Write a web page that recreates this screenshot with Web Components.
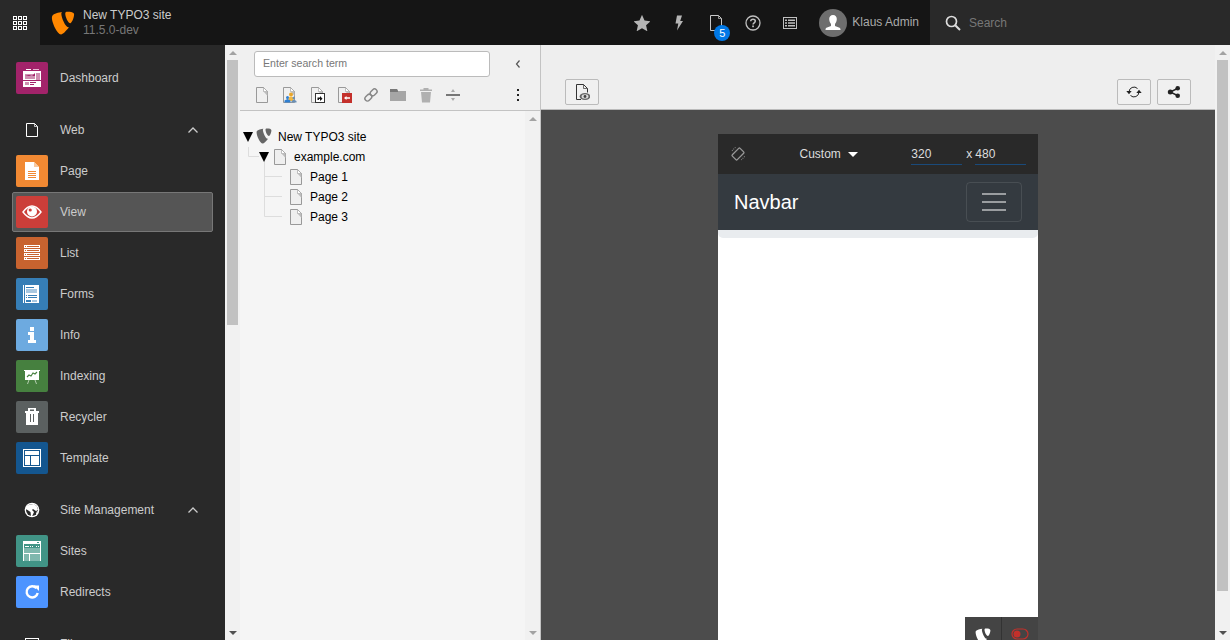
<!DOCTYPE html>
<html>
<head>
<meta charset="utf-8">
<title>TYPO3</title>
<style>
  html, body { margin: 0; height: 100%; overflow: hidden; }
  body { font: 12px/15px "Liberation Sans", Arial, sans-serif; color: #ccc; background: #292929; }
</style>
</head>
<body>
<typo3-backend></typo3-backend>

<script>
// icons are all drawn here so the elements below only pass a name around
const logoPath = 'M12.1 10.7c-.2.1-.4.1-.6.1-1.9 0-4.6-6.6-4.6-8.8 0-.8.2-1.1.5-1.3C5 .9 1.9 1.8.9 3.1c-.2.3-.3.8-.3 1.4C.6 7.9 4.2 15.6 6.7 15.6c1.2 0 3-1.8 5.4-4.9zM10.9.5c2.3 0 4.5.4 4.5 1.7 0 2.7-1.7 5.9-2.5 5.9-1.5 0-3.4-4.2-3.4-6.3 0-1 .4-1.3 1.4-1.3z';
const svg = (box, size, body) => `<svg xmlns="http://www.w3.org/2000/svg" width="${size}" height="${size}" viewBox="0 0 ${box} ${box}">${body}</svg>`;
const sheet = (fill, stroke) => `<path d="M2.5.5h7l4 4v11h-11z" fill="${fill}" stroke="${stroke}"/><path d="M9.5.5v4h4z" fill="#fff" stroke="${stroke}" stroke-width=".6"/><path d="M9.5 4.5h4V9z" fill="#bdbdbd"/>`;

const moduleIcons = {
  dashboard: `<rect x="7" y="9" width="18" height="16" fill="#fff"/><rect x="10" y="7" width="5" height="1" fill="#fff"/><rect x="17" y="7" width="6" height="1" fill="#e9b9d2"/><path d="M9 12h10v5H9z" fill="#cf8fb1"/><path d="M9 14l4-1 3 1 3-3v3H9z" fill="#a2236a"/><rect x="20" y="11" width="4" height="7" fill="#cf8fb1"/><rect x="7" y="18" width="18" height="1" fill="#a2236a"/><rect x="9" y="20" width="4" height="3" fill="#cf8fb1"/><rect x="14" y="20" width="6" height="1" fill="#a2236a"/><rect x="14" y="22" width="4" height="1" fill="#a2236a"/>`,
  page: `<path d="M9 7h9l5 5v13H9z" fill="#fff"/><path d="M18 7v5h5z" fill="#f8c9a0"/><path d="M12 16h8v1h-8zM12 18h8v1h-8zM12 20h8v1h-8zM12 22h8v1h-8z" fill="#f18933"/>`,
  view: `<path d="M7 16c3-4 6-6 9-6s6 2 9 6c-3 4-6 6-9 6s-6-2-9-6z" fill="none" stroke="#fff" stroke-width="1.4"/><circle cx="16" cy="15.5" r="5" fill="#fff"/><circle cx="14.2" cy="14" r="1.6" fill="#cc3e39"/>`,
  list: `<g fill="none" stroke="#fff"><rect x="8.5" y="8.5" width="15" height="2"/><rect x="8.5" y="12.5" width="15" height="2"/><rect x="8.5" y="16.5" width="15" height="2"/><rect x="8.5" y="20.5" width="15" height="2"/></g><path d="M10 8h1v3h-1zM10 12h1v3h-1zM10 16h1v3h-1zM10 20h1v3h-1z" fill="#fff"/>`,
  forms: `<g transform="translate(-2 0)"><rect x="9" y="7" width="1" height="18" fill="#fff"/><rect x="11" y="7" width="14" height="18" fill="#fff"/><rect x="12" y="9" width="8" height="1" fill="#367eb6"/><rect x="12" y="11" width="11" height="4" fill="#a7c7e0"/><path d="M12 17h1v1h-1zM14 17h9v1h-9zM12 19h1v1h-1zM14 19h9v1h-9z" fill="#367eb6"/><rect x="12" y="22" width="5" height="2" fill="#367eb6"/><rect x="18" y="22" width="5" height="2" fill="#a7c7e0"/></g>`,
  info: `<path d="M14 8h4v4h-4zM12 13h6v8h2v3h-8v-3h2v-5h-2z" fill="#fff"/>`,
  indexing: `<rect x="8" y="10" width="16" height="1" fill="#fff"/><rect x="9" y="11" width="14" height="9" fill="#fff"/><path d="M11 17l2-2 2 1 2-3 2 1 2-2" fill="none" stroke="#46803f" stroke-width="1.1"/><path d="M13 20l-1.500 4M19 20l1.500 4" stroke="#cfe0cc" stroke-width=".8" fill="none"/>`,
  recycler: `<path d="M12 7h8v3h3v2H9v-2h3z" fill="#fff"/><rect x="14" y="8.500" width="4" height="1.500" fill="#5b6060"/><path d="M10 12h12v12H10z" fill="#fff"/><path d="M14 13h1v8h-1zM17 13h1v8h-1z" fill="#5b6060"/>`,
  template: `<rect x="7.5" y="7.5" width="17" height="17" fill="none" stroke="#fff"/><rect x="9" y="9" width="14" height="4" fill="#fff"/><rect x="9" y="14" width="5" height="9" fill="#fff"/><rect x="15" y="14" width="8" height="9" fill="#fff"/>`,
  sites: `<rect x="7" y="6" width="18" height="3" fill="#fff"/><rect x="21" y="7" width="2" height="1" fill="#419486"/><rect x="7" y="9" width="1" height="17" fill="#fff"/><rect x="24" y="9" width="1" height="17" fill="#fff"/><path d="M9 11h4v1H9zM14 11h1v1h-1zM16 11h1v1h-1zM20 11h1v1h-1zM22 11h1v1h-1z" fill="#fff"/><rect x="8" y="13" width="16" height="5" fill="#7fb8ae"/><rect x="8" y="18" width="16" height="1" fill="#fff"/><rect x="8" y="19" width="5" height="7" fill="#7fb8ae"/><rect x="13" y="19" width="1" height="7" fill="#fff"/><rect x="14" y="19" width="10" height="7" fill="#7fb8ae"/>`,
  redirects: `<path d="M20.500 12.200A5.600 5.600 0 1 0 21.700 17" fill="none" stroke="#fff" stroke-width="2.400"/><path d="M17.500 9.500H23V15z" fill="#fff"/>`
};

const uiIcons = {
  web: svg(16, 16, `<path d="M2.500 1.500h8l3 3v10h-11z" fill="none" stroke="#fff"/><path d="M10.500 1.500v3h3" fill="none" stroke="#fff" stroke-width=".7"/>`),
  file: svg(16, 16, `<rect x="1.500" y="2.500" width="13" height="12" fill="none" stroke="#fff"/>`),
  globe: svg(16, 16, `<circle cx="8" cy="8" r="7.300" fill="#fff"/><circle cx="8" cy="8" r="6" fill="#292929"/><path d="M6 2.500l4-.5 3 2.500 1 3.500-2 1-3-2-1 1 2 2-2 4.500-1-.5-.5-4-3-2-2-1 1-3zM13 9l1 .5-1 3-1-.5z" fill="#fff"/>`),
  chevronUp: `<svg width="12" height="8" viewBox="0 0 12 8"><path d="M1.500 6.500L6 2l4.500 4.500" fill="none" stroke="#ccc" stroke-width="1.300"/></svg>`,
  grid: `<svg width="14" height="14" viewBox="0 0 14 14"><g fill="none" stroke="#fff"><rect x=".5" y=".5" width="3" height="3"/><rect x="5.500" y=".5" width="3" height="3"/><rect x="10.500" y=".5" width="3" height="3"/><rect x=".5" y="5.500" width="3" height="3"/><rect x="5.500" y="5.500" width="3" height="3"/><rect x="10.500" y="5.500" width="3" height="3"/><rect x=".5" y="10.500" width="3" height="3"/><rect x="5.500" y="10.500" width="3" height="3"/><rect x="10.500" y="10.500" width="3" height="3"/></g></svg>`,
  star: svg(16, 16, `<path d="M8 .3l2.300 5.200 5.600.6-4.200 3.700 1.200 5.500L8 12.500l-4.900 2.800 1.200-5.500L.1 6.100l5.600-.6z" fill="#b5b5b5" transform="translate(-.8 -.5) scale(1.100)"/>`),
  flash: svg(16, 16, `<path d="M6 .5h5L9.200 6H12l-6 9.500L7.300 8.500H4.500z" fill="#b5b5b5"/>`),
  docOutline: svg(16, 16, `<path d="M2.500.5h8l3 3v12h-11z" fill="none" stroke="#c8c8c8"/><path d="M10.500.5v3h3" fill="none" stroke="#c8c8c8" stroke-width=".7"/>`),
  help: svg(16, 16, `<circle cx="8" cy="8" r="7" fill="none" stroke="#c0c0c0" stroke-width="1.300"/><path d="M5.700 6.200C5.800 4.800 6.800 4.200 8 4.200c1.300 0 2.300.8 2.300 1.900 0 1.700-2.200 1.700-2.200 3.400" fill="none" stroke="#c0c0c0" stroke-width="1.500"/><rect x="7.200" y="10.500" width="1.700" height="1.700" fill="#c0c0c0"/>`),
  listBox: svg(16, 16, `<rect x="1.500" y="2.500" width="13" height="11" fill="none" stroke="#c0c0c0"/><path d="M3 4.500h2v1.500H3zM6 4.500h7v1.500H6zM3 7.200h2v1.500H3zM6 7.200h7v1.500H6zM3 10h2v1.500H3zM6 10h7v1.500H6z" fill="#c0c0c0"/>`),
  avatar: `<svg width="28" height="28" viewBox="0 0 28 28"><circle cx="14" cy="14" r="14" fill="#6e6e6e"/><path d="M14 6c2.500 0 3.800 1.800 3.800 4 0 2-1 4-1.800 5v2l4.500 1.800c.8.400 1 1.200 1 2.200H6.500c0-1 .2-1.800 1-2.200L12 17v-2c-.8-1-1.800-3-1.800-5 0-2.200 1.300-4 3.800-4z" fill="#fff"/></svg>`,
  search: `<svg width="16" height="16" viewBox="0 0 16 16"><circle cx="6.500" cy="6.500" r="5" fill="none" stroke="#ddd" stroke-width="1.700"/><path d="M10.200 10.200l4.800 4.800" stroke="#ddd" stroke-width="2" fill="none"/></svg>`,
  chevronLeft: `<svg width="8" height="10" viewBox="0 0 8 10"><path d="M5.500 1.500L2.500 5l3 3.500" fill="none" stroke="#555" stroke-width="1.200"/></svg>`,
  dots: `<svg width="4" height="14" viewBox="0 0 4 14"><path d="M1 1h2v2H1zM1 6h2v2H1zM1 11h2v2H1z" fill="#222"/></svg>`,
  newPage: svg(16, 16, sheet('#f0f0f0', '#999')),
  newShortcut: svg(16, 16, sheet('#f0f0f0', '#999') + `<circle cx="10" cy="7.500" r="2" fill="#e8a62c"/><path d="M7.500 14v-3.500l2.500-1 2.500 1V14z" fill="#f4b73f"/><circle cx="6.500" cy="10.500" r="1.500" fill="#2f7fd1"/><path d="M3.500 15.500V13.500l3-1.500 3 1.500v2z" fill="#2f7fd1"/><circle cx="12.800" cy="11" r="1.300" fill="#6a8fb5"/><path d="M10.500 15.500V14l2.300-1.500 2.700 1.500v1.500z" fill="#6a8fb5"/>`),
  pageCopy: svg(16, 16, sheet('#f0f0f0', '#999') + `<rect x="6.500" y="6.500" width="9" height="9" fill="#fff" stroke="#333"/><path d="M8.500 13v-2.500h2.500V9l2.500 2.700-2.500 2.300v-2H10V13z" fill="#111"/>`),
  pageDelete: svg(16, 16, sheet('#f0f0f0', '#999') + `<rect x="6" y="6" width="10" height="10" fill="#c4302b"/><path d="M8 11l2.500-2v1.300H14v1.500h-3.500V13z" fill="#fff"/>`),
  link: svg(16, 16, `<g fill="none" stroke="#888" stroke-width="1.500" transform="rotate(-45 8 8)"><rect x=".5" y="5.500" width="7.500" height="5" rx="2.500"/><rect x="8" y="5.500" width="7.500" height="5" rx="2.500"/></g>`),
  folder: svg(16, 16, `<path d="M0 2h7l1 2h8v10H0z" fill="#a6a6a6"/><path d="M0 2h7l1 2v1H0z" fill="#787878"/>`),
  trash: svg(16, 16, `<path d="M5.500 1h5v1.500H14V4H2V2.500h3.500z" fill="#b0b0b0"/><path d="M3 5h10l-1 10.500H4z" fill="#b0b0b0"/>`),
  divider: svg(16, 16, `<rect x="1" y="7" width="14" height="2" fill="#777"/><path d="M8 2l2 3H6zM8 14l-2-3h4z" fill="#aaa"/>`),
  viewPage: svg(16, 16, `<path d="M7 15.500H2.500V.5h7l4 4v4" fill="none" stroke="#333"/><path d="M9.500.5v4h4" fill="none" stroke="#333" stroke-width=".7"/><ellipse cx="11" cy="12.500" rx="5.400" ry="3.400" fill="#666"/><ellipse cx="11" cy="12.500" rx="3.400" ry="2.200" fill="#ddd"/><circle cx="11" cy="12.500" r="1.400" fill="#444"/>`),
  refresh: svg(16, 16, `<path d="M3 8a5 5 0 0 1 8.500-3.500M13 8a5 5 0 0 1-8.500 3.500" fill="none" stroke="#222" stroke-width="1"/><path d="M.3 7h5.400L3 10.200zM10.300 9h5.400L13 5.800z" fill="#222"/>`),
  share: svg(16, 16, `<circle cx="4.300" cy="8" r="2.500" fill="#222"/><circle cx="11.700" cy="4.300" r="2.300" fill="#222"/><circle cx="11.700" cy="11.700" r="2.300" fill="#222"/><path d="M4.300 8l7.400-3.700M4.300 8l7.400 3.700" stroke="#222" stroke-width="1.500"/>`),
  rotate: svg(16, 16, `<g transform="rotate(45 8 8)" fill="none"><rect x="4.500" y="2.500" width="7" height="11" rx="1" stroke-width="1.300" stroke="#999"/><path d="M1.500 5v6M14.500 5v6" stroke="#888" stroke-dasharray="1 1"/></g>`),
  caret: `<svg width="10" height="5" viewBox="0 0 10 5"><path d="M0 0h10L5 5z" fill="#fff"/></svg>`
};

class ScrollRail extends HTMLElement {
  connectedCallback() {
    const thumbH = this.getAttribute('thumb');
    const up = this.getAttribute('up') || '#a3a3a3';
    const down = this.getAttribute('down') || '#505050';
    const bg = this.getAttribute('bg') || '#f1f1f1';
    this.attachShadow({ mode: 'open' }).innerHTML = `
      <style>
        :host { display: flex; flex-direction: column; flex: none; width: 15px; height: 100%; background: ${bg}; }
        .btn { flex: none; height: 15px; display: flex; align-items: center; justify-content: center; }
        .track { flex: 1; min-height: 0; }
        .thumb { height: ${thumbH || 0}px; margin: 0 2px; background: #c1c1c1; }
      </style>
      <div class="btn"><svg width="8" height="4" viewBox="0 0 8 4"><path d="M4 0l4 4H0z" fill="${up}"/></svg></div>
      <div class="track"><div class="thumb"></div></div>
      <div class="btn"><svg width="8" height="4" viewBox="0 0 8 4"><path d="M0 0h8L4 4z" fill="${down}"/></svg></div>`;
  }
}

class ToolbarItem extends HTMLElement {
  connectedCallback() {
    this.attachShadow({ mode: 'open' }).innerHTML = `
      <style>
        :host { display: flex; align-items: center; justify-content: center; flex: none; width: 37px; height: 45px; }
        svg { display: block; }
      </style>${uiIcons[this.getAttribute('icon')]}<slot></slot>`;
  }
}

class TopBar extends HTMLElement {
  constructor() {
    super();
    this.attachShadow({ mode: 'open' }).innerHTML = `
      <style>
        :host { display: flex; flex: none; height: 45px; background: #151515; color: #ccc; }
        .toggle { width: 40px; background: #292929; display: flex; align-items: center; justify-content: center; }
        .brand { display: flex; align-items: center; padding-left: 11px; }
        .brand svg { display: block; margin-right: 8px; }
        .site { display: flex; flex-direction: column; }
        .site small { font-size: 12px; color: #777; }
        .tools { margin-left: auto; display: flex; align-items: center; padding-right: 11px; }
        .doc { position: relative; }
        .badge { position: absolute; left: 17px; top: 25px; width: 16px; height: 16px; border-radius: 50%; background: #0078e6; color: #fff; font-size: 11px; line-height: 16px; text-align: center; }
        .user { display: flex; align-items: center; margin-left: 11px; color: #aaa; }
        .user svg { display: block; margin-right: 5px; }
        .search { flex: none; width: 300px; background: #292929; display: flex; align-items: center; padding-left: 15px; box-sizing: border-box; color: #777; }
        .search svg { margin-right: 8px; }
        .search span { padding-top: 2px; }
      </style>
      <div class="toggle">${uiIcons.grid}</div>
      <div class="brand">
        <svg width="24" height="24" viewBox="0 0 16 16"><path d="${logoPath}" fill="#ff8700"/></svg>
        <div class="site"><span>New TYPO3 site</span><small>11.5.0-dev</small></div>
      </div>
      <div class="tools">
        <toolbar-item icon="star"></toolbar-item>
        <toolbar-item icon="flash"></toolbar-item>
        <toolbar-item icon="docOutline" class="doc"><span class="badge">5</span></toolbar-item>
        <toolbar-item icon="help"></toolbar-item>
        <toolbar-item icon="listBox"></toolbar-item>
        <div class="user">${uiIcons.avatar}<span>Klaus Admin</span></div>
      </div>
      <div class="search">${uiIcons.search}<span>Search</span></div>`;
  }
}

class ModuleItem extends HTMLElement {
  connectedCallback() {
    const icon = this.getAttribute('icon');
    this.attachShadow({ mode: 'open' }).innerHTML = `
      <style>
        :host { display: flex; align-items: center; box-sizing: border-box; height: 40px; width: 201px; margin: 0 0 1px 12px; padding-left: 4px; border: 1px solid transparent; border-left-width: 0; border-radius: 2px; }
        :host([active]) { background: #555; border: 1px solid #777; padding-left: 3px; }
        .tile { width: 32px; height: 32px; border-radius: 2px; margin-right: 12px; flex: none; }
        svg { display: block; }
      </style>
      <div class="tile" style="background:${this.getAttribute('color')}"><svg width="32" height="32" viewBox="0 0 32 32">${moduleIcons[icon]}</svg></div>
      <slot></slot>`;
  }
}

class ModuleGroup extends HTMLElement {
  connectedCallback() {
    const chev = this.hasAttribute('open') ? uiIcons.chevronUp : '';
    this.attachShadow({ mode: 'open' }).innerHTML = `
      <style>
        :host { display: block; }
        .head { display: flex; align-items: center; height: 42px; padding: 10px 26px 0 24px; }
        .head svg { display: block; flex: none; }
        .label { margin-left: 20px; flex: 1; }
      </style>
      <div class="head">${uiIcons[this.getAttribute('icon')]}<span class="label">${this.getAttribute('label')}</span>${chev}</div>
      <slot></slot>`;
  }
}

class ModuleMenu extends HTMLElement {
  constructor() {
    super();
    this.attachShadow({ mode: 'open' }).innerHTML = `
      <style>
        :host { display: flex; flex: none; width: 240px; height: 100%; background: #292929; color: #ccc; }
        .list { width: 225px; padding-top: 13px; overflow: hidden; box-sizing: border-box; }
      </style>
      <div class="list"><slot></slot></div>
      <scroll-rail thumb="265"></scroll-rail>`;
  }
}

class TreeNode extends HTMLElement {
  connectedCallback() {
    const level = +this.getAttribute('level') || 0;
    const w = 16 + 16 * level;
    const lines = {
      root: `<path d="M3 5h10L8 15z" fill="#000"/>`,
      site: `<path d="M8.500 0v9.500H19" fill="none" stroke="#ddd"/><path d="M24.500 14v6" stroke="#ddd"/><path d="M19 5h10L24 15z" fill="#000"/>`,
      leaf: `<path d="M24.500 0v20M24.500 9.500H42" fill="none" stroke="#ddd"/>`,
      last: `<path d="M24.500 0v9.500H42" fill="none" stroke="#ddd"/>`
    }[this.getAttribute('guide')];
    const icon = level === 0
      ? `<svg width="16" height="16" viewBox="0 0 16 16" style="margin-top:-2px"><path d="${logoPath}" fill="#666"/></svg>`
      : svg(16, 16, sheet('#efefef', '#999'));
    this.attachShadow({ mode: 'open' }).innerHTML = `
      <style>
        :host { display: flex; align-items: center; height: 20px; color: #000; }
        svg { display: block; flex: none; overflow: visible; }
        span { margin-left: 6px; }
      </style>
      <svg width="${w}" height="20" viewBox="0 0 ${w} 20">${lines}</svg>${icon}<span><slot></slot></span>`;
  }
}

class TreePanel extends HTMLElement {
  constructor() {
    super();
    const tools = ['newPage', 'newShortcut', 'pageCopy', 'pageDelete', 'link', 'folder', 'trash', 'divider'];
    this.attachShadow({ mode: 'open' }).innerHTML = `
      <style>
        :host { display: flex; flex-direction: column; flex: none; width: 301px; height: 100%; background: #f0f0f0; border-right: 1px solid #c3c3c3; box-sizing: border-box; }
        .head { flex: none; height: 66px; box-sizing: border-box; padding: 6px 14px 0; border-bottom: 1px solid #c3c3c3; }
        .searchrow { display: flex; align-items: center; }
        .field { width: 236px; height: 26px; box-sizing: border-box; border: 1px solid #bbb; border-radius: 3px; background: #fff; color: #777; font-size: 10.600px; line-height: 23px; padding-left: 8px; }
        .back { margin-left: 24px; display: flex; }
        .tools { display: flex; align-items: center; margin-top: 10px; height: 16px; }
        .tool { width: 27.300px; flex: none; }
        .tool svg, .back svg { display: block; }
        .more { margin-left: auto; margin-right: 6px; }
        .more svg { display: block; }
        .body { flex: 1; min-height: 0; display: flex; background: #f5f5f5; }
        .nodes { flex: 1; padding-top: 16px; }
      </style>
      <div class="head">
        <div class="searchrow"><div class="field">Enter search term</div><div class="back">${uiIcons.chevronLeft}</div></div>
        <div class="tools">${tools.map(t => `<div class="tool">${uiIcons[t]}</div>`).join('')}<div class="more">${uiIcons.dots}</div></div>
      </div>
      <div class="body">
        <div class="nodes"><slot></slot></div>
        <scroll-rail down="#a3a3a3"></scroll-rail>
      </div>`;
  }
}

class DeviceFrame extends HTMLElement {
  constructor() {
    super();
    this.attachShadow({ mode: 'open' }).innerHTML = `
      <style>
        :host { display: flex; flex-direction: column; position: relative; flex: none; width: 320px; height: 506px; background: #fff; }
        .size { flex: none; display: flex; align-items: center; height: 40px; background: #292929; color: #ddd; padding-left: 12px; }
        .size svg { display: block; flex: none; }
        .preset { margin-left: 53.500px; }
        .size .caret { margin: 0 53px 0 7.500px; }
        .num { width: 51px; box-sizing: border-box; height: 21px; line-height: 20px; border-bottom: 1px solid #1a4a7a; }
        .x { margin: 0 0 0 4px; width: 9px; }
        .navbar { flex: none; display: flex; align-items: center; justify-content: space-between; height: 56px; padding: 0 16px; background: #343a40; color: #fff; font-size: 20px; }
        .toggler { width: 56px; height: 40px; box-sizing: border-box; border: 1px solid rgba(255,255,255,.1); border-radius: 4px; display: flex; flex-direction: column; justify-content: center; align-items: center; gap: 6px; }
        .toggler i { display: block; width: 24px; height: 2px; background: #9a9da0; }
        .jumbo { flex: none; height: 8px; background: #e9ecef; border-radius: 0 0 5px 5px; }
        .admin { position: absolute; right: 0; bottom: 0; width: 73px; height: 23px; background: #444; display: flex; }
        .admin div { flex: 1; overflow: hidden; padding: 11px 0 0 0; display: flex; justify-content: center; }
        .admin div + div { border-left: 1px solid #333; }
      </style>
      <div class="size">
        ${uiIcons.rotate}
        <span class="preset">Custom</span><span class="caret">${uiIcons.caret}</span>
        <span class="num">320</span><span class="x">x</span><span class="num">480</span>
      </div>
      <div class="navbar"><span>Navbar</span><div class="toggler"><i></i><i></i><i></i></div></div>
      <div class="jumbo"></div>
      <div class="admin">
        <div><svg width="16" height="16" viewBox="0 0 16 16" style="flex:none"><path d="${logoPath}" fill="#fff"/></svg></div>
        <div><svg width="18" height="12" viewBox="0 0 18 12" style="flex:none"><rect x="1" y="1" width="16" height="10" rx="5" fill="none" stroke="#c4302b" stroke-width="1.200"/><circle cx="6" cy="6" r="3.500" fill="#c4302b"/></svg></div>
      </div>`;
  }
}

class ViewPanel extends HTMLElement {
  constructor() {
    super();
    this.attachShadow({ mode: 'open' }).innerHTML = `
      <style>
        :host { display: flex; flex-direction: column; flex: 1; min-width: 0; height: 100%; background: #4c4c4c; overflow: hidden; }
        .bar { flex: none; height: 65px; box-sizing: border-box; background: #eee; display: flex; align-items: flex-end; padding: 0 24px 4px; gap: 6px; border-bottom: 1px solid #bbb; }
        button { width: 34px; height: 26px; padding: 0; box-sizing: border-box; border: 1px solid #bbb; border-radius: 2px; background: #f0f0f0; display: flex; align-items: center; justify-content: center; }
        button svg { display: block; }
        .spacer { flex: 1; }
        .stage { flex: 1; min-height: 0; display: flex; justify-content: center; padding-top: 24px; }
      </style>
      <div class="bar">
        <button>${uiIcons.viewPage}</button>
        <div class="spacer"></div>
        <button>${uiIcons.refresh}</button>
        <button>${uiIcons.share}</button>
      </div>
      <div class="stage"><device-frame></device-frame></div>`;
  }
}

class Typo3Backend extends HTMLElement {
  constructor() {
    super();
    this.attachShadow({ mode: 'open' }).innerHTML = `
      <style>
        :host { display: flex; flex-direction: column; height: 640px; width: 1230px; overflow: hidden; }
        .main { flex: 1; min-height: 0; display: flex; }
      </style>
      <top-bar></top-bar>
      <div class="main">
        <module-menu>
          <module-item icon="dashboard" color="#a2236a">Dashboard</module-item>
          <module-group icon="web" label="Web" open>
            <module-item icon="page" color="#f18933">Page</module-item>
            <module-item icon="view" color="#cc3e39" active>View</module-item>
            <module-item icon="list" color="#c8632f">List</module-item>
            <module-item icon="forms" color="#367eb6">Forms</module-item>
            <module-item icon="info" color="#6daae0">Info</module-item>
            <module-item icon="indexing" color="#46803f">Indexing</module-item>
            <module-item icon="recycler" color="#5b6060">Recycler</module-item>
            <module-item icon="template" color="#14568f">Template</module-item>
          </module-group>
          <module-group icon="globe" label="Site Management" open>
            <module-item icon="sites" color="#419486">Sites</module-item>
            <module-item icon="redirects" color="#4d94ff">Redirects</module-item>
          </module-group>
          <module-group icon="file" label="File" open></module-group>
        </module-menu>
        <tree-panel>
          <tree-node level="0" guide="root">New TYPO3 site</tree-node>
          <tree-node level="1" guide="site">example.com</tree-node>
          <tree-node level="2" guide="leaf">Page 1</tree-node>
          <tree-node level="2" guide="leaf">Page 2</tree-node>
          <tree-node level="2" guide="last">Page 3</tree-node>
        </tree-panel>
        <view-panel></view-panel>
        <scroll-rail thumb="531"></scroll-rail>
      </div>`;
  }
}

customElements.define('scroll-rail', ScrollRail);
customElements.define('toolbar-item', ToolbarItem);
customElements.define('top-bar', TopBar);
customElements.define('module-item', ModuleItem);
customElements.define('module-group', ModuleGroup);
customElements.define('module-menu', ModuleMenu);
customElements.define('tree-node', TreeNode);
customElements.define('tree-panel', TreePanel);
customElements.define('device-frame', DeviceFrame);
customElements.define('view-panel', ViewPanel);
customElements.define('typo3-backend', Typo3Backend);
</script>
</body>
</html>
